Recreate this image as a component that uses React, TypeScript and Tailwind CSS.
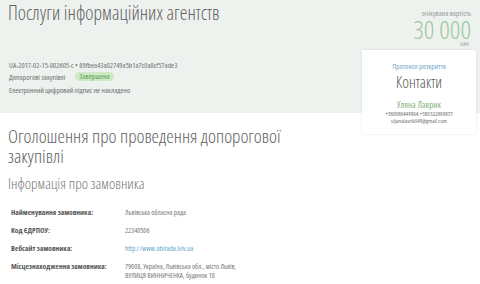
import React from "react";

export default function App() {
  const rows: { label: string; value: React.ReactNode }[] = [
    { label: "Найменування замовника:", value: "Львівська обласна рада" },
    { label: "Код ЄДРПОУ:", value: "22340506" },
    {
      label: "Вебсайт замовника:",
      value: <span className="text-[#5aa6cc]">http://www.oblrada.lviv.ua</span>,
    },
    {
      label: "Місцезнаходження замовника:",
      value: (
        <>
          79008, Україна, Львівська обл., місто Львів,
          <br />
          ВУЛИЦЯ ВИННИЧЕНКА, будинок 18
        </>
      ),
    },
  ];
  return (
    <div
      className="w-[480px] h-[284px] overflow-hidden bg-white text-[#555] font-stretch-[80%]"
      style={{ fontFamily: '"Open Sans", "Noto Sans", sans-serif' }}
    >
      <div className="relative h-[113px] bg-[#eef2ef]">
        <div className="flex justify-between pl-[8px] pr-[9px]">
          <h1 className="text-[19.5px] font-light leading-[24px] pt-[1px] text-[#626262]">
            Послуги інформаційних агентств
          </h1>
          <div className="flex flex-col items-end pt-[9px]">
            <div className="text-[7.5px] leading-[8px] text-[#9a9a9a]">очікувана вартість</div>
            <div className="text-[26px] font-light leading-[25px] text-[#a0c79e]">30 000</div>
            <div className="text-[6px] leading-[7px] text-[#a0a0a0] pr-[2px] -mt-[1px]">UAH</div>
          </div>
        </div>
        <div className="pl-[9px] pt-[13px] text-[7.5px] text-[#707070] flex flex-col gap-[3px]">
          <div className="leading-[8px]">
            UA-2017-02-15-002605-c • 89fbea43a02749a5b1a7c0a8cf57ade3
          </div>
          <div className="flex items-center gap-[10px] leading-[8px]">
            <span>Допорогові закупівлі</span>
            <span className="rounded-full bg-[#cdeac5] px-[4px] text-[#5c9c52] leading-[9px]">
              Завершена
            </span>
          </div>
          <div className="leading-[8px] pt-[2px]">Електронний цифровий підпис не накладено</div>
        </div>
        <div className="absolute left-[362px] top-[50px] w-[114px] h-[84px] bg-white shadow-[0_0_2px_rgba(0,0,0,0.12)] flex flex-col items-center pt-[12px]">
          <div className="text-[7.5px] leading-[8px] text-[#73a7cb]">Протокол розкриття</div>
          <div className="text-[16px] font-light leading-[16px] text-[#5a5a5a] mt-[4px]">Контакти</div>
          <div className="text-[9px] leading-[10px] text-[#86b27c] mt-[10px]">Уляна Лаврик</div>
          <div className="text-[6px] leading-[7px] text-[#707070] mt-[1px]">
            +380986449964,+380322999837
          </div>
          <div className="text-[5.9px] leading-[7px] text-[#707070]">uljanalavrik049@gmail.com</div>
        </div>
      </div>
      <div className="pl-[8px] pt-[13px]">
        <h2 className="text-[19px] font-light leading-[20px] text-[#626262]">
          Оголошення про проведення допорогової
          <br />
          закупівлі
        </h2>
        <h3 className="text-[15px] font-light leading-[20px] text-[#777] mt-[7px]">
          Інформація про замовника
        </h3>
        <div className="mt-[15px] pl-[3px] flex flex-col gap-[9.5px] text-[7.5px]">
          {rows.map((r) => (
            <div key={r.label} className="grid grid-cols-[114px_1fr] leading-[8.5px]">
              <div className="font-bold text-[#555]">{r.label}</div>
              <div className="text-[#777] text-[7.2px]">{r.value}</div>
            </div>
          ))}
        </div>
      </div>
    </div>
  );
}
